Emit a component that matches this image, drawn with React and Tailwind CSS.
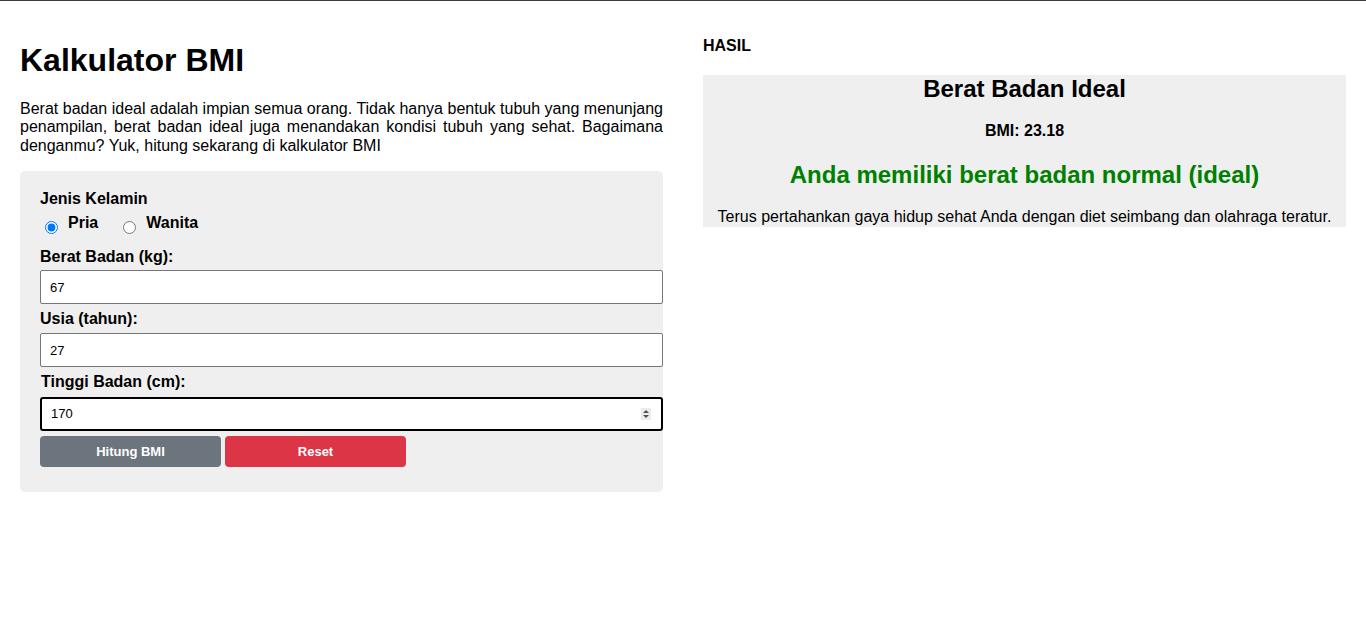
import React from 'react';

const Field = ({ label, value, focused, className = '', labelClass = '' }) => (
    <>
        <label className={`block text-base font-bold leading-[18.4px] ${labelClass}`}>{label}</label>
        <div className={`relative ${className}`}>
            <input
                type="text"
                defaultValue={value}
                className={`block w-full h-[34px] bg-white text-[13px] text-black outline-none ${
                    focused
                        ? 'border-2 border-black rounded-[3px] pl-[9px]'
                        : 'border border-[#767676] rounded-[2px] pl-[9px]'
                }`}
            />
            {focused && (
                <svg
                    className="absolute right-[12px] top-[11px]"
                    width="10"
                    height="12"
                    viewBox="0 0 10 12"
                >
                    <rect x="0" y="0" width="10" height="12" fill="#ececec" />
                    <path d="M5 2 L8 5 L2 5 Z" fill="#505050" />
                    <path d="M5 10 L8 7 L2 7 Z" fill="#505050" />
                </svg>
            )}
        </div>
    </>
);

const App = () => {
    return (
        <div className="min-h-[642px] bg-white border-t border-[#3c3c3c] font-['Liberation_Sans',Arial,sans-serif] text-black">
            <div className="flex gap-10 px-5 pt-5">
                {/* kiri: form */}
                <div className="flex-1 min-w-0">
                    <h1 className="mt-[21px] text-[32px] font-bold leading-[37px]">Kalkulator BMI</h1>
                    <p className="mt-[21px] text-base leading-[18.4px] text-justify">
                        Berat badan ideal adalah impian semua orang. Tidak hanya bentuk tubuh yang menunjang
                        penampilan, berat badan ideal juga menandakan kondisi tubuh yang sehat. Bagaimana
                        denganmu? Yuk, hitung sekarang di kalkulator BMI
                    </p>

                    <div className="mt-4 bg-[#efefef] rounded-[5px] pl-5 pt-[19px] pb-[25px]">
                        <p className="text-base font-bold leading-[18.4px]">Jenis Kelamin</p>
                        <div className="mt-[5px] flex items-start text-base font-bold leading-[18.4px]">
                            <input type="radio" name="jk" defaultChecked className="mt-[7px] ml-[5px] w-[13px] h-[13px]" />
                            <span className="ml-[10px]">Pria</span>
                            <input type="radio" name="jk" className="mt-[7px] ml-[25px] w-[13px] h-[13px]" />
                            <span className="ml-[10px]">Wanita</span>
                        </div>

                        <div className="mt-[14px]">
                            <Field label="Berat Badan (kg):" value="67" className="mt-[4px]" />
                        </div>
                        <div className="mt-[6px]">
                            <Field label="Usia (tahun):" value="27" className="mt-[5px]" />
                        </div>
                        <div className="mt-[6px]">
                            <Field label="Tinggi Badan (cm):" value="170" focused labelClass="ml-px" className="mt-[5px]" />
                        </div>

                        <div className="mt-[5px] flex gap-1">
                            <button className="w-[181px] h-[31px] pt-px rounded-[4px] bg-[#6c757d] text-white text-[13px] font-bold">
                                Hitung BMI
                            </button>
                            <button className="w-[181px] h-[31px] pt-px rounded-[4px] bg-[#dc3545] text-white text-[13px] font-bold">
                                Reset
                            </button>
                        </div>
                    </div>
                </div>

                {/* kanan: hasil */}
                <div className="flex-1 min-w-0">
                    <h4 className="mt-[16px] text-base font-bold leading-[18.4px]">HASIL</h4>
                    <div className="mt-[20px] bg-[#efefef] text-center pb-px">
                        <h2 className="text-2xl font-bold leading-[27.6px]">Berat Badan Ideal</h2>
                        <p className="mt-[19px] text-base font-bold leading-[18.4px]">BMI: 23.18</p>
                        <h2 className="mt-[21px] text-2xl font-bold leading-[27.6px] text-[#008000]">
                            Anda memiliki berat badan normal (ideal)
                        </h2>
                        <p className="mt-[19px] text-base leading-[18.4px]">
                            Terus pertahankan gaya hidup sehat Anda dengan diet seimbang dan olahraga teratur.
                        </p>
                    </div>
                </div>
            </div>
        </div>
    );
};

export default App;
